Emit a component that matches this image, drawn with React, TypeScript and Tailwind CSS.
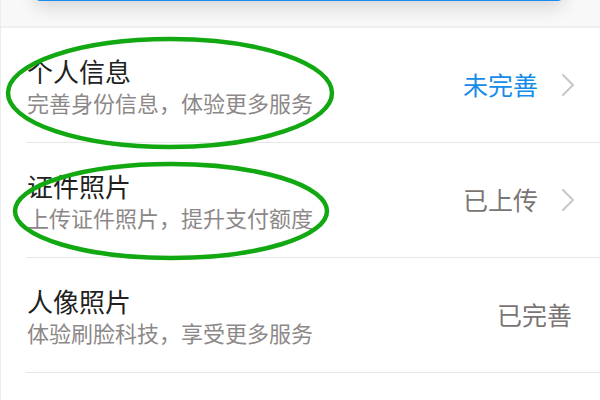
type Row = {
  title: string;
  desc: string;
  status: string;
  done?: boolean;
  arrow?: boolean;
};

const rows: Row[] = [
  { title: "个人信息", desc: "完善身份信息，体验更多服务", status: "未完善", arrow: true },
  { title: "证件照片", desc: "上传证件照片，提升支付额度", status: "已上传", done: true, arrow: true },
  { title: "人像照片", desc: "体验刷脸科技，享受更多服务", status: "已完善", done: true },
];

function Chevron() {
  return (
    <svg width="14" height="24" viewBox="0 0 14 24" className="ml-[23px] shrink-0">
      <polyline
        points="2,2 12,12 2,22"
        fill="none"
        stroke="#c7c7cc"
        strokeWidth="2"
        strokeLinecap="round"
        strokeLinejoin="round"
      />
    </svg>
  );
}

export default function App() {
  return (
    <div className="relative w-[600px] h-[400px] overflow-hidden bg-white border-l border-[#ececec] font-['Noto_Sans_CJK_SC','Noto_Sans',sans-serif]">
      {/* bottom edge of the blue button above */}
      <div className="flow-root h-[28px] bg-[#f8f8f8] border-b-2 border-[#efefef] pl-[34px] pr-[37px]">
        <div className="-mt-[40px] h-[41px] rounded-b-[5px] bg-[#1a8cf0] shadow-[0_6px_18px_rgba(0,0,0,0.14)]" />
      </div>

      {rows.map((r) => (
        <div
          key={r.title}
          className="ml-[25px] h-[115px] border-b border-[#e6e6e6] pl-[1px] pr-[25px] flex items-center justify-between"
        >
          <div className="flex flex-col gap-[4px]">
            <span className="text-[26px] leading-[30px] text-[#231f1f]">{r.title}</span>
            <span className="text-[22px] leading-[24px] text-[#8d8888]">{r.desc}</span>
          </div>
          <div className="flex items-center">
            <span
              className={
                r.done
                  ? "text-[25px] text-[#7a7575]"
                  : "text-[25px] text-[#168ce8]"
              }
            >
              {r.status}
            </span>
            {r.arrow ? <Chevron /> : <span className="w-[3px]" />}
          </div>
        </div>
      ))}

      <svg
        className="absolute inset-0 pointer-events-none"
        width="600"
        height="400"
        viewBox="0 0 600 400"
      >
        <ellipse cx="169" cy="93" rx="162" ry="54" fill="none" stroke="#12a812" strokeWidth="4.5" />
        <ellipse cx="170" cy="211" rx="156" ry="47" fill="none" stroke="#12a812" strokeWidth="4.5" />
      </svg>
    </div>
  );
}
